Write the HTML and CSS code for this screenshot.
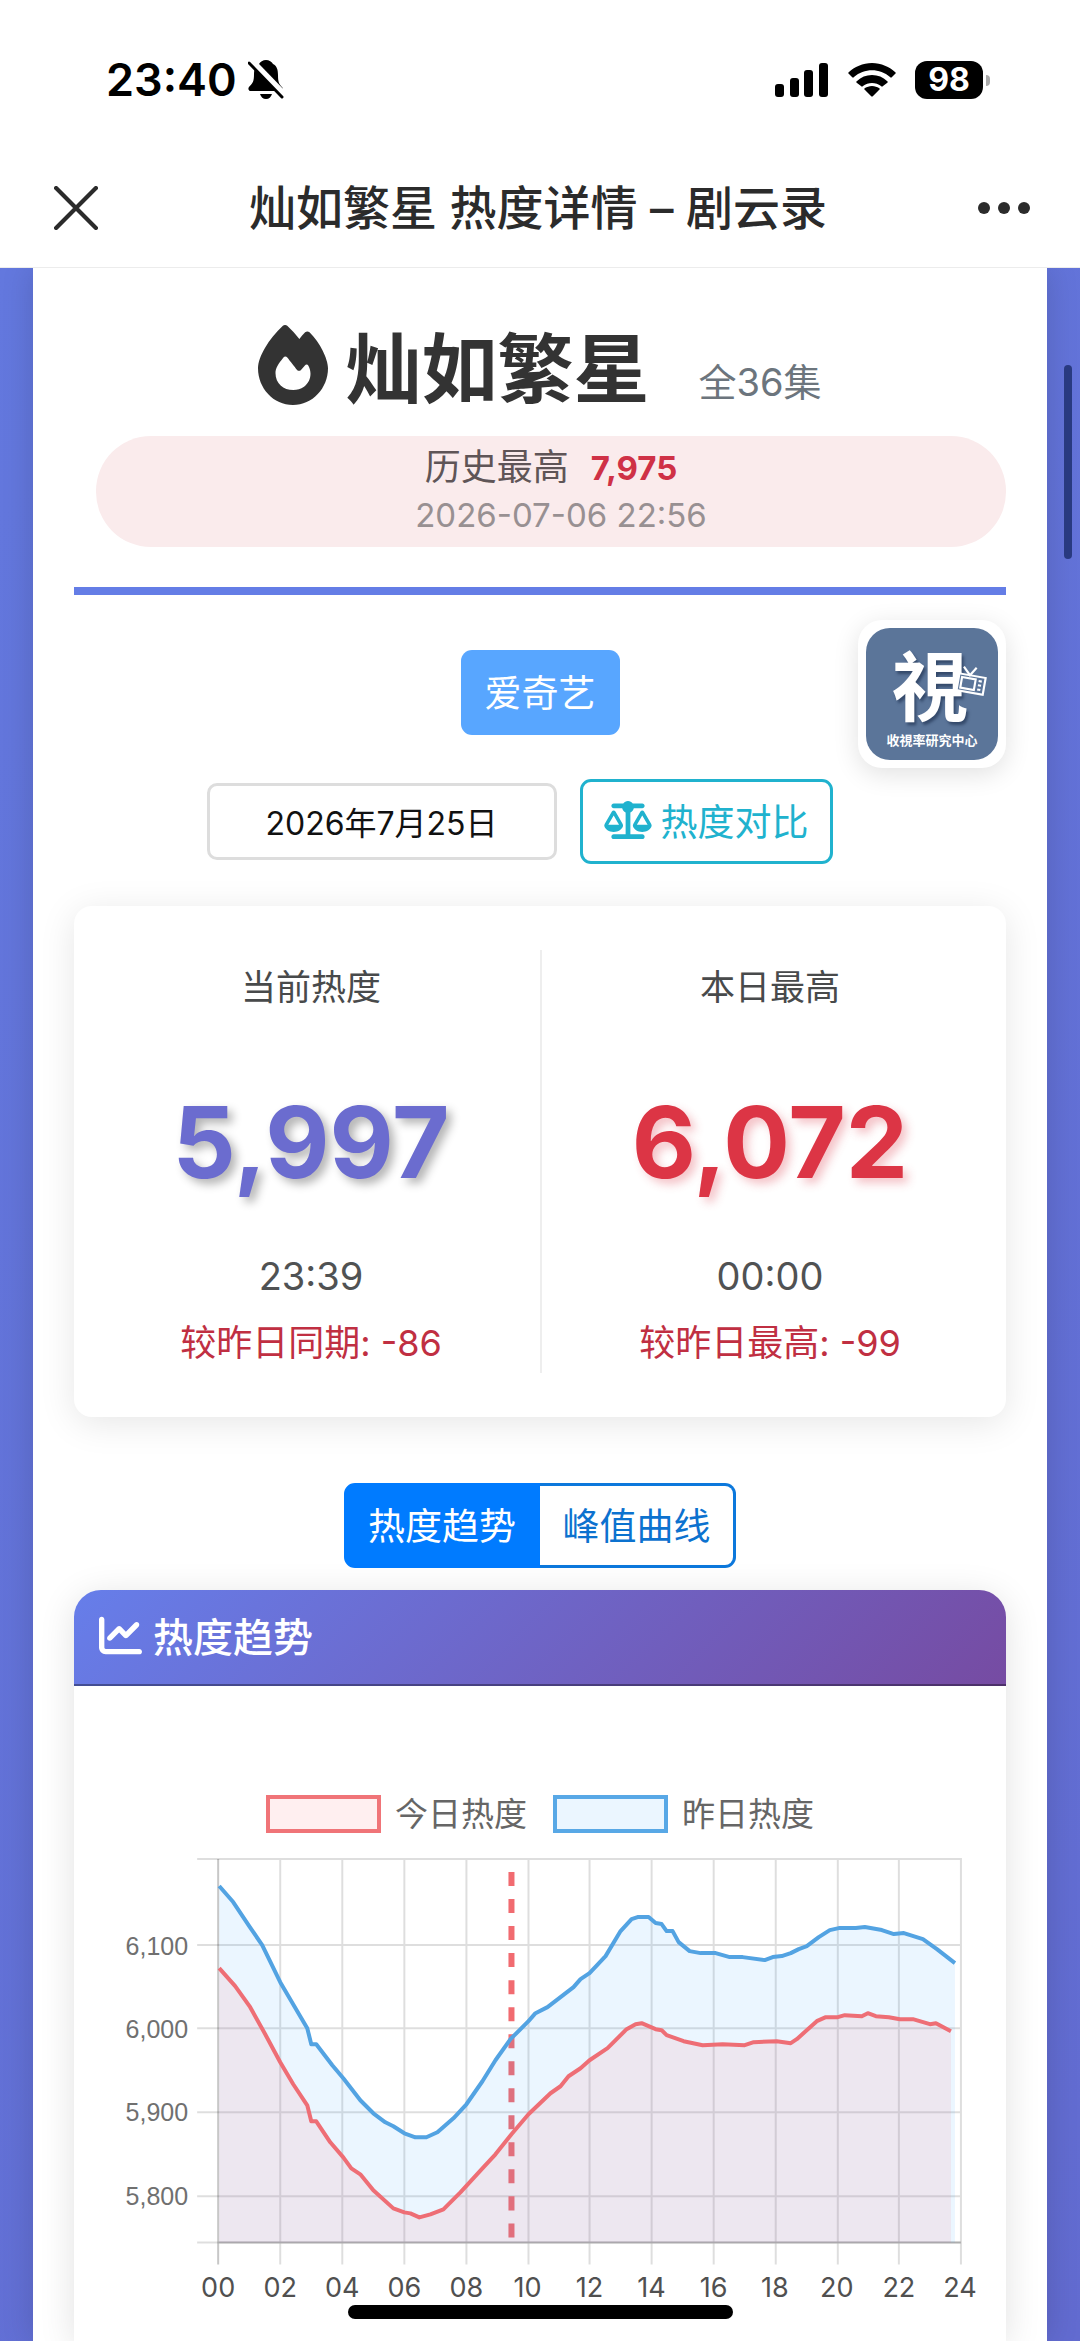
FILE: index.html
```html
<!DOCTYPE html>
<html lang="zh-CN">
<head>
<meta charset="utf-8">
<meta name="viewport" content="width=device-width, initial-scale=1">
<title>灿如繁星 热度详情 – 剧云录</title>
<link rel="stylesheet" href="styles.css">
</head>
<body>
<header class="topbar">
  <div class="status">
    <div class="status-group">
      <span class="clock">23:40</span>
      <svg class="bell" viewBox="0 0 36 40" aria-hidden="true">
        <path d="M11 4C12 2 15 0 18 0s6 2 7 4c4 2 5 6 5 11 0 7 1 9 4 12 1 1 1 4-1 4H3c-3 0-3-3-2-4 4-4 5-6 5-13 0-5 2-8 5-10zM12 34h12c-1 3-3 5-6 5s-5-2-6-5z"/>
        <path d="M3 0l34 35" stroke="#fff" stroke-width="6"/>
        <path d="M1 3l33 34" stroke="#000" stroke-width="3" stroke-linecap="round"/>
      </svg>
    </div>
    <div class="status-group status-right">
      <svg class="signal" viewBox="0 0 54 34" aria-hidden="true"><rect y="21" width="9" height="13" rx="3"/><rect x="15" y="15" width="9" height="19" rx="3"/><rect x="29" y="7" width="9" height="27" rx="3"/><rect x="44" width="9" height="34" rx="3"/></svg>
      <svg class="wifi" viewBox="0 0 48 34" aria-hidden="true"><path d="M24 0C15 0 6 4 1 9c-1 1-1 1 0 2l3 3c1 1 1 1 2 0 10-9 26-9 36 0 1 1 1 1 2 0l3-3c1-1 1-1 0-2-5-5-14-9-23-9zM24 12c-6 0-11 2-15 6-1 1-1 1 0 2l4 3c1 1 1 1 2 0 5-4 13-4 18 0 1 1 1 1 2 0l4-3c1-1 1-1 0-2-4-4-9-6-15-6zM24 23c-3 0-5 1-7 2-1 1-1 1 0 2l6 6c1 1 1 1 2 0l6-6c1-1 1-1 0-2-2-1-4-2-7-2z"/></svg>
      <span class="battery">98</span>
    </div>
  </div>
  <nav class="nav">
    <button class="nav-button" aria-label="关闭"><svg class="close" viewBox="0 0 42 42"><path d="M2 2l38 38M40 2L2 40" stroke="#2b2b2b" stroke-width="4" stroke-linecap="round"/></svg></button>
    <span class="nav-title">灿如繁星 热度详情 – 剧云录</span>
    <button class="nav-button" aria-label="更多"><svg class="more" viewBox="0 0 52 12"><circle cx="6" cy="6" r="6"/><circle cx="26" cy="6" r="6"/><circle cx="46" cy="6" r="6"/></svg></button>
  </nav>
</header>

<div class="page">
<main class="container">
  <section class="hero">
    <h1 class="title">
      <svg class="fire" viewBox="0 0 448 512" aria-hidden="true"><path d="M159.300 5.400c7.800-7.300 19.900-7.200 27.700 .1c27.600 25.900 53.500 53.800 77.700 84c11-14.400 23.500-30.100 37-42.900c7.900-7.400 20.100-7.400 28 .1c34.600 33 63.900 76.600 84.500 118c20.300 40.800 33.800 82.500 33.800 111.900C448 404.200 348.200 512 224 512C98.400 512 0 404.100 0 276.500c0-38.400 17.800-85.300 45.400-131.700C73.300 97.700 112.700 48.600 159.300 5.400zM225.700 416c25.300 0 47.700-7 68.800-21c42.100-29.400 53.400-88.200 28.100-134.400c-4.500-9-16-9.600-22.500-2l-25.200 29.300c-6.600 7.600-18.500 7.400-24.700-.5c-16.500-21-46-58.500-62.800-79.800c-6.300-8-18.300-8.100-24.700-.1c-33.800 42.500-50.800 69.300-50.800 99.400C112 375.400 162.600 416 225.700 416z"/></svg>
      <span class="title-text">灿如繁星</span>
      <small class="episodes">全36集</small>
    </h1>
    <div class="record">
      <div class="record-line">历史最高 <strong class="record-value">7,975</strong></div>
      <time class="record-time">2026-07-06 22:56</time>
    </div>
  </section>

  <section class="filters">
    <button class="platform">爱奇艺</button>
    <div class="filter-row">
      <input class="date" type="text" aria-label="日期" value="2026年7月25日">
      <button class="compare">
        <svg class="scale" viewBox="0 0 640 512" aria-hidden="true"><path d="M384 32H512c17.700 0 32 14.300 32 32s-14.300 32-32 32H398.400c-5.200 25.800-22.900 47.100-46.400 57.300V448H512c17.700 0 32 14.300 32 32s-14.300 32-32 32H128c-17.700 0-32-14.300-32-32s14.300-32 32-32H288V153.300c-23.500-10.300-41.200-31.600-46.400-57.300H128c-17.700 0-32-14.300-32-32s14.300-32 32-32H256c14.600-19.400 37.800-32 64-32s49.400 12.600 64 32zm55.600 288H584.400L512 195.800 439.600 320zM512 416c-62.900 0-115.200-34-126-78.900c-2.600-11 1-22.300 6.700-32.100l95.200-163.200c5-8.600 14.200-13.800 24.100-13.800s19.100 5.300 24.100 13.800l95.200 163.200c5.700 9.800 9.300 21.100 6.700 32.100C627.200 382 574.900 416 512 416zM126.800 195.800L54.400 320H199.300L126.800 195.800zM.9 337.100c-2.600-11 1-22.300 6.700-32.100l95.200-163.200c5-8.600 14.200-13.800 24.100-13.800s19.100 5.300 24.100 13.800l95.200 163.200c5.700 9.800 9.300 21.100 6.700 32.100C242 382 189.700 416 126.800 416S11.700 382 .9 337.100z"/></svg>
        热度对比
      </button>
    </div>
    <div class="brand">
      <div class="brand-tile">
        <span class="brand-glyph">視</span>
        <span class="brand-name">收視率研究中心</span>
        <svg class="brand-tv" viewBox="0 0 32 30" aria-hidden="true"><g fill="none" stroke="#fff" stroke-width="2" transform="rotate(10 16 16)"><path d="M3 10h25v16H3z" fill="#5b7599"/><path d="M6 13h13v10H6zM6 3l7 7 5-8"/><path d="M22 14h3M22 18h3M22 22h3"/></g></svg>
      </div>
    </div>
  </section>

  <section class="stats">
    <div class="stat">
      <h2 class="stat-label">当前热度</h2>
      <div class="stat-value stat-now">5,997</div>
      <div class="stat-time">23:39</div>
      <div class="stat-diff">较昨日同期: -86</div>
    </div>
    <div class="stat">
      <h2 class="stat-label">本日最高</h2>
      <div class="stat-value stat-peak">6,072</div>
      <div class="stat-time">00:00</div>
      <div class="stat-diff">较昨日最高: -99</div>
    </div>
  </section>

  <div class="tabs">
    <button class="tab tab-active">热度趋势</button>
    <button class="tab">峰值曲线</button>
  </div>

  <section class="card">
    <h2 class="card-head">
      <svg class="trend" viewBox="0 0 512 512" aria-hidden="true"><path d="M64 64c0-17.700-14.300-32-32-32S0 46.300 0 64V400c0 44.200 35.800 80 80 80H480c17.700 0 32-14.300 32-32s-14.300-32-32-32H80c-8.800 0-16-7.200-16-16V64zm406.600 86.600c12.500-12.500 12.500-32.800 0-45.300s-32.800-12.500-45.300 0L320 210.700l-57.400-57.400c-12.500-12.500-32.800-12.500-45.300 0l-112 112c-12.500 12.500-12.500 32.800 0 45.300s32.800 12.500 45.300 0L240 221.300l57.400 57.400c12.500 12.500 32.800 12.500 45.300 0l128-128z"/></svg>
      热度趋势
    </h2>
    <div class="legend">
      <span class="legend-item"><i class="swatch swatch-today"></i>今日热度</span>
      <span class="legend-item"><i class="swatch swatch-yesterday"></i>昨日热度</span>
    </div>
    <svg class="chart" viewBox="0 0 931 480" role="img" aria-label="热度趋势">
      <path class="grid" d="M123 9H887M123 95H887M123 178H887M123 262H887M123 346H887M123 392H887M206 9V414M268 9V414M330 9V414M392 9V414M454 9V414M515 9V414M577 9V414M639 9V414M701 9V414M763 9V414M824 9V414M886 9V414"/>
      <path class="axis" d="M144 9V414M144 392H886"/>
      <path class="marker" d="M437 22V392"/>
      <path class="area-yesterday" d="M145 36L159 52 175 76 188 95 206 132 223 161 233 178 237 194 242 194 258 215 269 228 286 250 299 263 311 272 319 276 330 283 341 287 352 287 363 282 379 268 392 254 408 231 421 210 436 189 454 171 461 163 473 157 486 147 499 137 506 129 515 123 531 106 546 81 557 69 563 67 574 67 581 73 587 74 592 81 598 81 604 92 615 101 626 103 641 103 655 107 668 107 690 110 698 107 707 106 716 103 724 99 732 96 744 87 755 80 764 78 781 78 790 77 807 80 819 84 829 83 848 89 862 99 880 113V392H145z"/>
      <path class="line-yesterday" d="M145 36L159 52 175 76 188 95 206 132 223 161 233 178 237 194 242 194 258 215 269 228 286 250 299 263 311 272 319 276 330 283 341 287 352 287 363 282 379 268 392 254 408 231 421 210 436 189 454 171 461 163 473 157 486 147 499 137 506 129 515 123 531 106 546 81 557 69 563 67 574 67 581 73 587 74 592 81 598 81 604 92 615 101 626 103 641 103 655 107 668 107 690 110 698 107 707 106 716 103 724 99 732 96 744 87 755 80 764 78 781 78 790 77 807 80 819 84 829 83 848 89 862 99 880 113"/>
      <path class="area-today" d="M145 118L161 136 176 157 191 184 206 212 219 234 233 255 237 271 242 271 256 292 269 307 277 318 286 324 299 340 319 358 330 362 336 363 345 367 356 364 369 359 386 342 408 318 421 304 437 284 454 264 476 243 486 236 494 226 506 218 515 210 533 198 552 179 561 174 567 173 581 179 587 180 592 185 609 191 628 195 648 194 670 195 679 192 702 191 716 193 722 189 742 171 751 167 763 167 770 165 787 166 793 163 801 166 814 167 825 169 838 169 855 174 861 173 876 181V392H145z"/>
      <path class="line-today" d="M145 118L161 136 176 157 191 184 206 212 219 234 233 255 237 271 242 271 256 292 269 307 277 318 286 324 299 340 319 358 330 362 336 363 345 367 356 364 369 359 386 342 408 318 421 304 437 284 454 264 476 243 486 236 494 226 506 218 515 210 533 198 552 179 561 174 567 173 581 179 587 180 592 185 609 191 628 195 648 194 670 195 679 192 702 191 716 193 722 189 742 171 751 167 763 167 770 165 787 166 793 163 801 166 814 167 825 169 838 169 855 174 861 173 876 181"/>
      <g class="y-label"><text x="114" y="105">6,100</text><text x="114" y="188">6,000</text><text x="114" y="271">5,900</text><text x="114" y="355">5,800</text></g>
      <g class="x-label"><text x="144" y="447">00</text><text x="206" y="447">02</text><text x="268" y="447">04</text><text x="330" y="447">06</text><text x="392" y="447">08</text><text x="453" y="447">10</text><text x="515" y="447">12</text><text x="577" y="447">14</text><text x="639" y="447">16</text><text x="700" y="447">18</text><text x="762" y="447">20</text><text x="824" y="447">22</text><text x="885" y="447">24</text></g>
    </svg>
  </section>
</main>
</div>
<div class="scroll-thumb"></div>
<div class="home-bar"></div>
</body>
</html>
```

FILE: styles.css
```css
* { box-sizing: border-box; }

body {
  margin: 0;
  min-height: 100vh;
  display: flex;
  flex-direction: column;
  background: #fff;
  color: #333;
  font-family: Inter, "Noto Sans CJK SC", sans-serif;
}

button, input { font-family: inherit; margin: 0; }
h1, h2 { margin: 0; font-weight: 400; }
svg { display: block; flex: none; }

/* Phone status bar and page title bar */
.topbar { border-bottom: 1px solid #ececec; }
.status {
  display: flex;
  justify-content: space-between;
  align-items: center;
  height: 160px;
  padding: 0 90px 0 106px;
}
.status-group { display: flex; align-items: center; gap: 11px; }
.status-right { gap: 19px; }
.clock { font-size: 45px; font-weight: 600; line-height: 56px; color: #000; }
.bell { width: 36px; height: 40px; }
.signal { width: 54px; height: 34px; }
.wifi { width: 48px; height: 34px; }
.battery {
  position: relative;
  width: 68px;
  margin-right: 7px;
  border-radius: 12px;
  background: #000;
  color: #fff;
  font-size: 32px;
  font-weight: 700;
  line-height: 38px;
  text-align: center;
}
.battery::after {
  content: "";
  position: absolute;
  top: 14px;
  right: -7px;
  width: 4px;
  height: 11px;
  border-radius: 0 4px 4px 0;
  background: #aaa;
}
.nav {
  display: flex;
  justify-content: space-between;
  align-items: center;
  height: 107px;
  padding: 0 50px 12px 54px;
}
.nav-button { padding: 0; border: 0; background: none; }
.close { width: 44px; height: 44px; }
.more { width: 52px; height: 12px; fill: #2b2b2b; }
.nav-title { font-size: 47px; font-weight: 500; line-height: 60px; color: #2b2b2b; }

/* Page */
.page {
  flex: 1;
  display: flex;
  flex-direction: column;
  padding: 0 33px;
  overflow: hidden;
  background: linear-gradient(135deg, #6378de, #626bd0);
}
.container {
  flex: 1;
  display: flex;
  flex-direction: column;
  padding: 0 41px;
  background: #fff;
  box-shadow: 0 0 30px rgba(0, 0, 0, .15);
}

.hero { padding: 50px 0 40px; border-bottom: 8px solid #647de6; }
.title {
  display: flex;
  justify-content: center;
  align-items: center;
  gap: 17px;
  height: 94px;
  font-size: 76px;
  font-weight: 700;
  line-height: 94px;
}
.title-text { padding-top: 8px; }
.fire { width: 70px; height: 80px; fill: #333; }
.episodes {
  align-self: flex-end;
  margin-left: 32px;
  font-size: 38px;
  font-weight: 400;
  line-height: 60px;
  color: #6c757d;
}
.record {
  margin: 24px 0 0 22px;
  padding: 8px 0;
  border-radius: 55px;
  background: #faebec;
  text-align: center;
}
.record-line { font-size: 36px; line-height: 47px; color: #5f5557; }
.record-value { margin-left: 12px; font-size: 33px; font-weight: 700; color: #cf3146; }
.record-time {
  display: block;
  padding-left: 20px;
  font-size: 33px;
  line-height: 47px;
  color: #989092;
}

.filters {
  position: relative;
  display: flex;
  flex-direction: column;
  align-items: center;
  padding: 55px 0 42px;
}
.platform {
  height: 85px;
  padding: 0 24px 4px;
  border: 0;
  border-radius: 11px;
  background: #58a6ff;
  color: #fff;
  font-size: 37px;
}
.filter-row {
  display: flex;
  align-items: center;
  gap: 23px;
  margin-top: 44px;
  padding-right: 41px;
}
.date {
  width: 350px;
  height: 77px;
  padding: 0 0 2px;
  border: 3px solid #ddd;
  border-radius: 10px;
  background: #fff;
  color: #111;
  font-size: 32px;
  text-align: center;
}
.compare {
  display: flex;
  align-items: center;
  gap: 9px;
  height: 85px;
  padding: 0 21px 4px;
  border: 3px solid #20b2ce;
  border-radius: 11px;
  background: #fff;
  color: #20b2ce;
  font-size: 37px;
}
.scale { width: 48px; height: 38px; fill: currentColor; }

.brand {
  position: absolute;
  top: 25px;
  right: 0;
  padding: 8px;
  border-radius: 24px;
  background: #fff;
  box-shadow: 0 6px 26px rgba(0, 0, 0, .12);
}
.brand-tile {
  position: relative;
  display: flex;
  flex-direction: column;
  align-items: center;
  width: 132px;
  height: 132px;
  border-radius: 24px;
  background: #5b7599;
  color: #fff;
  font-family: "Noto Sans CJK TC", sans-serif;
  font-weight: 700;
}
.brand-glyph { padding: 12px 4px 4px 0; font-size: 76px; line-height: 84px; text-shadow: 2px 3px 3px #34496a; }
.brand-name { font-size: 13px; line-height: 24px; }
.brand-tv { position: absolute; top: 37px; right: 9px; width: 34px; height: 32px; }

.stats {
  display: grid;
  grid-template-columns: 1fr 1fr;
  padding: 44px 8px;
  border-radius: 18px;
  box-shadow: 0 6px 36px rgba(0, 0, 0, .1);
  text-align: center;
}
.stat { padding-top: 7px; }
.stat + .stat { border-left: 2px solid #eee; }
.stat-label { font-size: 35px; line-height: 60px; color: #484a4b; }
.stat-value { padding: 58px 0 38px; font-size: 99px; font-weight: 700; line-height: 134px; }
.stat-now { color: #6b6ccf; text-shadow: 5px 5px 10px rgba(0, 0, 0, .3); }
.stat-peak { color: #dc3545; text-shadow: 5px 5px 10px rgba(220, 53, 69, .3); }
.stat-time { font-size: 38px; line-height: 58px; color: #505253; }
.stat-diff { padding-top: 8px; font-size: 36px; line-height: 60px; color: #c02f42; }

.tabs { display: flex; justify-content: center; margin: 66px 0 22px; }
.tab {
  width: 196px;
  height: 85px;
  padding: 0 0 4px;
  border: 3px solid #0c78dc;
  border-left: 0;
  border-radius: 0 11px 11px 0;
  background: #fff;
  color: #0c72cf;
  font-size: 37px;
}
.tab-active {
  border: 3px solid #007bff;
  border-radius: 11px 0 0 11px;
  background: #007bff;
  color: #fff;
}

.card {
  flex: 1;
  border-radius: 27px 27px 0 0;
  box-shadow: 0 6px 36px rgba(0, 0, 0, .12);
}
.card-head {
  display: flex;
  align-items: center;
  gap: 11px;
  height: 96px;
  padding: 0 25px 4px;
  border-bottom: 2px solid rgba(0, 0, 0, .35);
  border-radius: 27px 27px 0 0;
  background: linear-gradient(135deg, #667eea, #764ba2) border-box;
  color: #fff;
  font-size: 40px;
  font-weight: 500;
}
.trend { width: 43px; height: 43px; fill: #fff; }
.legend {
  display: flex;
  justify-content: center;
  gap: 26px;
  padding: 104px 0 12px;
}
.legend-item { display: flex; align-items: center; gap: 14px; font-size: 33px; line-height: 48px; color: #666; }
.swatch { width: 115px; height: 38px; border: 4px solid; }
.swatch-today { border-color: #f07478; background: #ffeff0; }
.swatch-yesterday { border-color: #58a8e6; background: #ebf6ff; }

.chart { width: 100%; height: auto; }
.chart path { fill: none; stroke-linejoin: round; }
.chart .grid { stroke: rgba(0, 0, 0, .13); stroke-width: 2; }
.chart .axis { stroke: rgba(0, 0, 0, .22); stroke-width: 2; }
.chart .marker { stroke: #f16b70; stroke-width: 6; stroke-dasharray: 14 13; }
.chart .area-yesterday { fill: rgba(54, 162, 255, .1); }
.chart .line-yesterday { stroke: #53a3e2; stroke-width: 4; }
.chart .area-today { fill: rgba(255, 99, 110, .1); }
.chart .line-today { stroke: #ee6e75; stroke-width: 4; }
.y-label { font-family: "Liberation Sans", sans-serif; font-size: 25px; fill: #707070; text-anchor: end; }
.x-label { font-size: 27px; fill: #505050; text-anchor: middle; }

/* System overlays */
.scroll-thumb {
  position: fixed;
  top: 365px;
  right: 8px;
  width: 8px;
  height: 194px;
  border-radius: 4px;
  background: #293a80;
}
.home-bar {
  position: fixed;
  bottom: 22px;
  left: 50%;
  width: 385px;
  height: 14px;
  margin-left: -192px;
  border-radius: 7px;
  background: #000;
}
```
